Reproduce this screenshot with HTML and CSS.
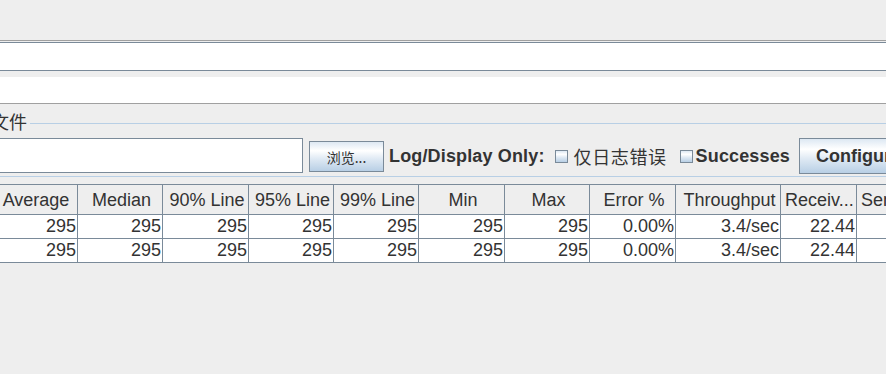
FILE: index.html
```html
<!DOCTYPE html>
<html lang="zh-CN">
<head>
    <meta charset="UTF-8">
    <title>聚合报告</title>
    <link rel="stylesheet" href="styles.css">
</head>
<body>
    <div class="top-space"></div>
    <div class="divider"></div>
    <div class="name-field"></div>
    <div class="comment-box"></div>

    <div class="file-panel">
        <div class="panel-title">
            <span>所有数据写入一个文件</span>
            <div class="title-line"></div>
        </div>
        <div class="file-row">
            <div class="file-input"></div>
            <button class="browse-button">浏览...</button>
            <span class="row-label">Log/Display Only:</span>
            <span class="check check-errors"></span>
            <span class="check-text cjk">仅日志错误</span>
            <span class="check check-success"></span>
            <span class="check-text bold">Successes</span>
            <button class="config-button">Configure</button>
        </div>
    </div>

    <div class="report-table">
        <div class="table-head">
            <div class="cell">Average</div>
            <div class="cell">Median</div>
            <div class="cell">90% Line</div>
            <div class="cell">95% Line</div>
            <div class="cell">99% Line</div>
            <div class="cell">Min</div>
            <div class="cell">Max</div>
            <div class="cell">Error %</div>
            <div class="cell">Throughput</div>
            <div class="cell cut">Receiv...</div>
            <div class="cell cut">Sent KB/sec</div>
        </div>
        <div class="table-row">
            <div class="cell">295</div>
            <div class="cell">295</div>
            <div class="cell">295</div>
            <div class="cell">295</div>
            <div class="cell">295</div>
            <div class="cell">295</div>
            <div class="cell">295</div>
            <div class="cell">0.00%</div>
            <div class="cell">3.4/sec</div>
            <div class="cell">22.44</div>
            <div class="cell">3.77</div>
        </div>
        <div class="table-row">
            <div class="cell">295</div>
            <div class="cell">295</div>
            <div class="cell">295</div>
            <div class="cell">295</div>
            <div class="cell">295</div>
            <div class="cell">295</div>
            <div class="cell">295</div>
            <div class="cell">0.00%</div>
            <div class="cell">3.4/sec</div>
            <div class="cell">22.44</div>
            <div class="cell">3.77</div>
        </div>
    </div>
</body>
</html>
```

FILE: styles.css
```css
body {
    width: 886px;
    height: 374px;
    margin: 0;
    overflow: hidden;
    background: #eeeeee;
    color: #333333;
    font-family: "Liberation Sans", "Noto Sans CJK SC", sans-serif;
    font-size: 18px;
}

.top-space {
    height: 40px;
}

.divider {
    height: 1px;
    background: #a0a0a0;
    margin-bottom: 1px;
}

.name-field {
    height: 27px;
    background: #ffffff;
    border-top: 1px solid #7a8a99;
    border-bottom: 1px solid #7a8a99;
}

.comment-box {
    height: 26px;
    margin-top: 6px;
    background: #ffffff;
    border-bottom: 1px solid #a0a0a0;
}

/* titled border panel */
.file-panel {
    border-bottom: 1px solid #b8cfe5;
    padding-bottom: 2px;
}

.panel-title {
    display: flex;
    align-items: center;
    height: 21px;
    margin-top: 9px;
    margin-left: -153px;
}

.panel-title span {
    line-height: 17px;
    padding-bottom: 4px;
    white-space: nowrap;
    font-family: "Noto Sans CJK SC", sans-serif;
}

.title-line {
    flex: 1;
    height: 1px;
    margin-left: 3px;
    background: #b8cfe5;
}

.file-row {
    display: flex;
    align-items: flex-start;
    height: 36px;
    margin-top: 4px;
    margin-left: -20px;
    white-space: nowrap;
}

.file-input {
    flex: none;
    width: 321px;
    height: 33px;
    background: #ffffff;
    border: 1px solid #7a8a99;
}

.browse-button,
.config-button {
    flex: none;
    border: 1px solid #7a8a99;
    background: linear-gradient(#dde8f3 0%, #ffffff 30%, #dde8f3 60%, #b8cfe5 100%);
    color: #333333;
    padding: 0;
    margin: 0;
}

.browse-button {
    width: 75px;
    height: 31px;
    margin-top: 3px;
    margin-left: 6px;
    font-family: "Noto Sans CJK SC", sans-serif;
    font-size: 14px;
}

.row-label {
    margin-left: 5px;
    line-height: 36px;
    font-weight: bold;
    letter-spacing: 0.15px;
}

.check {
    flex: none;
    width: 11px;
    height: 11px;
    margin-top: 12px;
    border: 1px solid #7a8a99;
    background: linear-gradient(#dde8f3 0%, #ffffff 30%, #dde8f3 60%, #b8cfe5 100%);
}

.check-errors {
    margin-left: 10px;
}

.check-success {
    margin-left: 13px;
}

.check-text {
    line-height: 36px;
}

.check-text.cjk {
    margin-left: 6px;
    letter-spacing: 0.6px;
    font-family: "Noto Sans CJK SC", sans-serif;
}

.check-text.bold {
    margin-left: 3px;
    font-weight: bold;
    letter-spacing: 0.15px;
}

.config-button {
    width: 120px;
    height: 36px;
    margin-left: 9px;
    padding-left: 16px;
    text-align: left;
    font-family: "Liberation Sans", sans-serif;
    font-size: 18px;
    font-weight: bold;
}

/* result table */
.report-table {
    margin-top: 7px;
    margin-left: -8px;
}

.table-head,
.table-row {
    display: grid;
    grid-template-columns: 86px 85px 86px 85px 85px 86px 85px 86px 105px 76px 100px;
    border-bottom: 1px solid #7a8a99;
}

.table-head {
    border-top: 1px solid #7a8a99;
    background: #eeeeee;
}

.table-row {
    background: #ffffff;
}

.cell {
    overflow: hidden;
    white-space: nowrap;
    border-right: 1px solid #7a8a99;
}

.table-head .cell {
    height: 28px;
    padding-top: 1px;
    padding-left: 3px;
    line-height: 28px;
    text-align: center;
}

.table-head .cell.cut {
    text-align: left;
    padding-left: 4px;
}

.table-row .cell {
    height: 23px;
    line-height: 23px;
    text-align: right;
    padding-right: 1px;
}
```
